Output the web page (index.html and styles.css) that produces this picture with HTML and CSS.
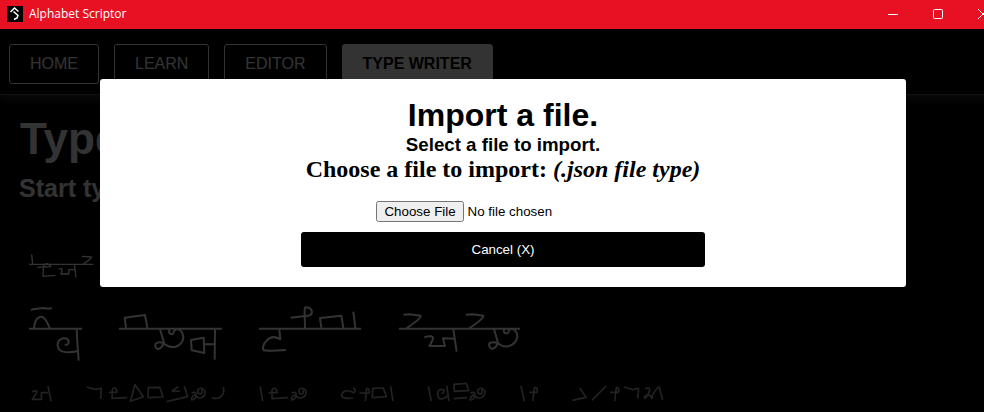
FILE: index.html
```html
<!DOCTYPE html>
<html lang="en">
<head>
<meta charset="utf-8">
<title>Alphabet Scriptor</title>
<link rel="stylesheet" href="styles.css">
</head>
<body>
<div class="window">
  <header class="titlebar">
    <svg class="logo" viewBox="0 0 16 16" aria-hidden="true"><path d="M0 0h16v16H0z" fill="#000"/><path d="M3.500 6 7.500 2l4 3.500M6.500 5.500 11 9.500 10 12l-3 1.500" fill="none" stroke="#fff" stroke-width="1.500"/></svg>
    <span class="app-name">Alphabet Scriptor</span>
    <div class="controls">
      <button aria-label="Minimize"><svg viewBox="0 0 10 10"><path d="M0 5.500h10"/></svg></button>
      <button aria-label="Maximize"><svg viewBox="0 0 10 10"><rect x=".5" y=".5" width="9" height="9" rx="1"/></svg></button>
      <button aria-label="Close"><svg viewBox="0 0 10 10"><path d="m0 0 10 10M10 0 0 10"/></svg></button>
    </div>
  </header>
  <div class="app">
    <nav class="nav">
      <a href="#home">HOME</a>
      <a href="#learn">LEARN</a>
      <a href="#editor">EDITOR</a>
      <a href="#writer" class="active">TYPE WRITER</a>
    </nav>
    <main>
      <h1 class="page-title">Type Writer</h1>
      <h2 class="page-sub">Start typing</h2>
      <svg class="script first" viewBox="0 0 600 165" width="200" height="55" aria-hidden="true">
        <path d="M87 88H280M95 58l3 28M112 97l40-2q-4-10-14-9-8 2-8 14l-1 24 37-3M176 103q12-5 10 2l-3 12h23l1-13h18M223 88l5 39M245 64l29 2q-2 8-23 20"/>
      </svg>
      <svg class="script" viewBox="0 0 1650 240" width="550" height="80" aria-hidden="true">
        <path d="M87 116H246M93 60l10-3 27-3 14 2 11-2M102 114q3-25 13-31 11-7 19 3 8 10 15 28M230 118l2 40 4 54M194 164q13 2 12-10-2-10-15-9-15 2-18 16-2 17 13 23 20 6 47-1"/>
        <path d="M357 116H666M378 113l-4-30 61-8 7 38M480 118l12 40q-8 20-19 19-10-4-6-16 10-8 25 0 15 12 32 10 24-6 26-28-1-20-15-25-13-2-14 10-4 8-12 2-4-8 1-10M645 117l-1 92M612 163l33-1M573 150l38-7 2 46-38-8z"/>
        <path d="M777 116H1083M838 118l3 30q-25-15-41 4-14 14-10 28 10 4 68 0M872 83l44-5q20 0 20-12-2-14-19-14-4 0-3 20l1 42M964 113l-4-29 64-7 6 37M1060 65l6 49"/>
        <path d="M1197 116H1560M1210 74l20-1 32 4q0 10-42 37M1398 74l20-1 32 4q0 10-42 37M1273 142q20-6 26 0 0 10-11 26h47l-6-23 37 1M1360 118l10 67M1482 118l12 40q-8 20-20 18-9-6-6-16 10-6 26 0 14 12 30 9 24-6 28-28 0-18-12-23-14-3-14 8-5 8-13 2-4-8 1-10"/>
      </svg>
      <svg class="script small" viewBox="0 0 2100 126" width="700" height="42" aria-hidden="true">
        <path d="M96 65q17-6 14 3l-13 20h28l-1-20h20M144 48l9 46"/>
        <path d="M260 51l26 7 18-3-2 32M327 67h24q0-14-9-13-7 1-5 15l-1 16 46-2M405 44l-14 50 39-14zM445 53l34-1 10 29-45 2zM535 50q-23 14-17 14l22-1M553 49l10 31-63 15M575 69q14-6 14 6-2 14-14 15-2-10 10-16M602 84q17-6 12-22-10-13-20-3-4 12 8 13 8-4 2-12M585 74q4 10 17 10M670 51q4 17-4 26-12 13-30 6"/>
        <path d="M781 49l7 44M806 68h25q0-14-9-13-8 1-6 15v16l48-3M875 69q14-6 14 6-2 14-14 15-2-10 10-16M904 84q17-6 14-22-10-13-20-3-4 12 8 13 8-4 2-12M885 74q4 10 19 10M1060 53q10 10 2 15-30-14-37 6-2 14 34 10M1078 69h30q2-14-8-14l-4 38M1118 55l32-1 9 26-42 3zM1172 49l7 44M1285 49l9 44M1324 70q10 0 8-10-16-6-19 9 0 19 12 18 16-4 20-14M1340 47l7 46M1362 43l37-3 7 22-43 2zM1361 86l40-3"/>
        <path d="M1411 69q14-6 14 6-2 14-14 15-2-10 10-16M1440 84q17-6 14-22-10-13-20-3-4 12 8 13 8-4 2-12M1421 74q4 10 19 10M1563 48l10 46M1588 67h23q4-15-7-15l-6 41M1740 55l18 27-41 9M1818 48l-42 43M1830 67h25q4-15-6-15l-5 41M1872 51l25 8 19-4-3 31M1935 56q15-6 14 5-10 25-15 24-3-6 7-10 10-2 15 10 0-15 20-34M1977 49l11 40"/>
      </svg>
    </main>
    <div class="overlay">
      <section class="modal" role="dialog" aria-labelledby="import-title">
        <h1 id="import-title">Import a file.</h1>
        <h3>Select a file to import.</h3>
        <label for="import-file">Choose a file to import: <i>(.json file type)</i></label>
        <input type="file" id="import-file" accept=".json">
        <button class="cancel">Cancel (X)</button>
      </section>
    </div>
  </div>
</div>
</body>
</html>
```
FILE: styles.css
```css
* { box-sizing: border-box; }
html, body { height: 100%; }
body {
  margin: 0;
  overflow: hidden;
  background: #000;
  color: #fff;
  font-family: "Liberation Sans", Arial, sans-serif;
}
h1, h2, h3 { margin: 0; }

/* The window runs slightly past the right edge of the viewport. */
.window {
  display: flex;
  flex-direction: column;
  width: calc(100% + 22px);
  min-height: 100%;
}

.titlebar {
  display: flex;
  align-items: center;
  height: 29px;
  padding: 0 1px 2px 7px;
  background: #e81123;
}
.logo { width: 16px; height: 16px; }
.app-name {
  margin-left: 6px;
  font: 12px/16px "Open Sans", "Noto Sans", sans-serif;
}
.controls { display: flex; margin-left: auto; }
.controls button {
  display: grid;
  place-items: center;
  width: 45px;
  height: 26px;
  padding: 0;
  border: 0;
  background: none;
}
.controls svg {
  width: 10px;
  height: 10px;
  fill: none;
  stroke: #fff;
  overflow: visible;
}

.app { position: relative; flex: 1; overflow: hidden; }

.nav {
  display: flex;
  gap: 15px;
  padding: 15px 9px 10px;
  border-bottom: 1px solid #555;
  box-shadow: 0 4px 10px #333;
  background: #000;
}
.nav a {
  padding: 0 20px;
  border: 1px solid #fff;
  border-radius: 3px;
  color: #fff;
  font-size: 16px;
  line-height: 38px;
  text-decoration: none;
}
.nav .active { background: #fff; color: #000; font-weight: bold; }

.page-title { padding: 19px 20px 0; font-size: 44px; line-height: 50px; }
.page-sub { padding: 10px 19px 0; font-size: 25px; line-height: 28px; }

.script {
  display: block;
  fill: none;
  stroke: #fff;
  stroke-width: 6;
  stroke-linejoin: round;
}
.script.first { margin-top: 33px; stroke-width: 4; }
.script.small { stroke: #aaa; stroke-width: 5; }

.overlay {
  position: absolute;
  inset: 0;
  display: flex;
  align-items: flex-start;
  justify-content: center;
  padding-top: 50px;
  background: rgba(0, 0, 0, 0.8);
}
.modal {
  display: flex;
  flex-direction: column;
  align-items: center;
  width: calc(80% + 1px);
  padding: 18px 20px 20px;
  border-radius: 3px;
  background: #fff;
  color: #000;
}
.modal h1 { font-size: 32px; line-height: 37px; }
.modal h3 { line-height: 22px; }
.modal label {
  font: bold 24px/27px "Liberation Serif", "Times New Roman", serif;
}
.modal input { margin: 18px 0 10px; }
.cancel {
  width: 404px;
  max-width: 100%;
  height: 35px;
  border: 0;
  border-radius: 3px;
  background: #000;
  color: #fff;
  font-family: "Liberation Sans", Arial, sans-serif;
}
```
